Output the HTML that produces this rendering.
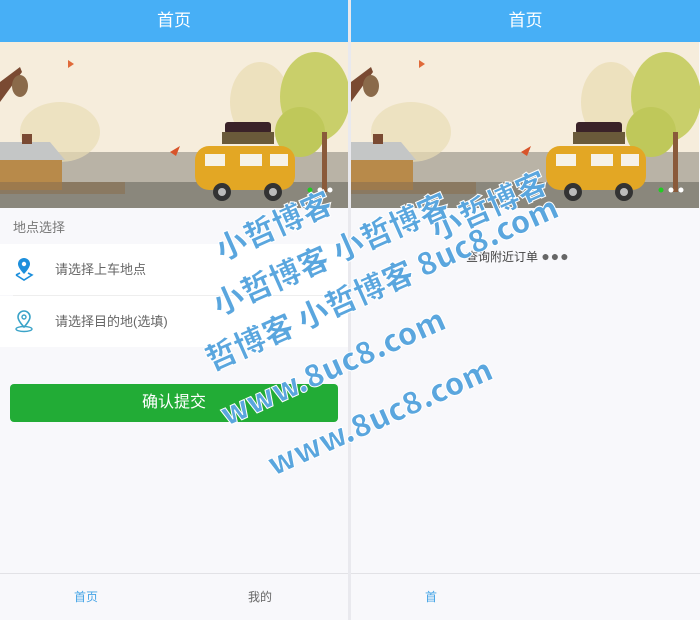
<!DOCTYPE html>
<html><head><meta charset="utf-8"><style>
*{margin:0;padding:0;box-sizing:border-box}
body{width:700px;height:620px;background:#e9e9ee;font-family:"Liberation Sans","Noto Sans CJK SC",sans-serif;position:relative;overflow:hidden}
.p{position:absolute;top:0;height:620px;background:#f8f8fb}
.hd{height:42px;background:#47aff6;color:#fff;font-size:17px;text-align:center;line-height:42px}
.bn{height:166px;position:relative;overflow:hidden}
.lbl{height:36px;line-height:40px;padding-left:13px;font-size:13px;color:#777}
.row{height:51px;background:#fff;position:relative;font-size:13px;color:#666;line-height:51px;padding-left:55px}
.row svg{position:absolute;left:13px;top:13px}
.btn{position:absolute;left:10px;top:384px;width:328px;height:38px;background:#22ac36;border-radius:4px;color:#fff;font-size:16px;text-align:center;line-height:38px}
.tab{position:absolute;left:0;right:0;top:573px;height:47px;border-top:1px solid #e2e2e6;background:#f8f8fb;font-size:12px;line-height:46px}
.wm{position:absolute;font-family:"Noto Sans CJK SC","DejaVu Sans",sans-serif;font-weight:900;font-size:31px;color:#5aa6de;-webkit-text-stroke:1px #fff;transform:rotate(-24deg);transform-origin:0 0;white-space:nowrap;line-height:1}
</style></head><body>
<svg width="0" height="0" style="position:absolute"><defs>
<g id="ban">
<rect width="348" height="166" fill="#f6eddc"/>
<rect y="110" width="348" height="56" fill="#b9b3a6"/>
<rect y="140" width="348" height="26" fill="#8a877c"/>
<ellipse cx="60" cy="90" rx="40" ry="30" fill="#e9ddb5" opacity=".7"/>
<ellipse cx="260" cy="60" rx="30" ry="40" fill="#eadcb0" opacity=".7"/>
<ellipse cx="315" cy="55" rx="35" ry="45" fill="#c9cf6a"/>
<ellipse cx="300" cy="90" rx="25" ry="25" fill="#bfc85a"/>
<rect x="322" y="90" width="5" height="60" fill="#8a5a3a"/>
<path d="M0 40 L20 25 L22 30 L0 60Z" fill="#7a4a32"/>
<ellipse cx="20" cy="44" rx="8" ry="11" fill="#8a6a4a"/>
<path d="M0 100 L50 100 L65 118 L0 118Z" fill="#c4c6c6"/>
<rect x="0" y="118" width="62" height="30" fill="#b88a4a"/>
<rect x="22" y="92" width="10" height="10" fill="#7a4a32"/>
<rect x="0" y="140" width="125" height="12" fill="#8a7050" opacity=".6"/>
<rect x="225" y="80" width="46" height="12" rx="3" fill="#3a2228"/>
<rect x="222" y="90" width="52" height="12" fill="#6a5a3a"/>
<rect x="195" y="104" width="100" height="44" rx="14" fill="#e3a724"/>
<rect x="205" y="112" width="20" height="12" fill="#f6f2e8"/>
<rect x="240" y="112" width="22" height="12" fill="#f6f2e8"/>
<rect x="270" y="112" width="18" height="12" fill="#f6f2e8"/>
<circle cx="222" cy="150" r="9" fill="#333"/><circle cx="222" cy="150" r="4" fill="#bbb"/>
<circle cx="273" cy="150" r="9" fill="#333"/><circle cx="273" cy="150" r="4" fill="#bbb"/>
<path d="M68 18 l6 4 -6 4z" fill="#e06a3a"/><path d="M170 110 l10 -6 -4 10z" fill="#d8542a"/>
<circle cx="310" cy="148" r="2.5" fill="#2c2"/><circle cx="320" cy="148" r="2.5" fill="#fff"/><circle cx="330" cy="148" r="2.5" fill="#fff"/>
</g></defs></svg>

<div class="p" style="left:0;width:348px">
<div class="hd">首页</div>
<div class="bn"><svg width="348" height="166"><use href="#ban"/></svg></div>
<div class="lbl">地点选择</div>
<div class="row"><svg width="22" height="24" viewBox="0 0 22 24"><path d="M11 1a6 6 0 0 1 6 6c0 4-6 10-6 10S5 11 5 7a6 6 0 0 1 6-6z" fill="#1d8fdc"/><circle cx="11" cy="7" r="2.2" fill="#fff"/><path d="M3 18l8 5 8-5-4-2M7 16l-4 2" fill="none" stroke="#1d8fdc" stroke-width="1.6"/></svg>请选择上车地点</div>
<div style="height:1px;background:#eee;margin-left:13px"></div>
<div class="row"><svg width="22" height="24" viewBox="0 0 22 24"><path d="M11 2a6 6 0 0 1 6 6c0 4-6 10-6 10S5 12 5 8a6 6 0 0 1 6-6z" fill="none" stroke="#3aa3c8" stroke-width="1.6"/><circle cx="11" cy="8" r="2" fill="none" stroke="#3aa3c8" stroke-width="1.4"/><ellipse cx="11" cy="20" rx="8" ry="2.5" fill="none" stroke="#3aa3c8" stroke-width="1.4"/></svg>请选择目的地(选填)</div>
<div class="btn">确认提交</div>
<div class="tab"><span style="position:absolute;left:74px;color:#45a4e6">首页</span><span style="position:absolute;left:248px;color:#666">我的</span></div>
</div>

<div class="p" style="left:351px;width:349px">
<div class="hd">首页</div>
<div class="bn"><svg width="349" height="166"><use href="#ban"/></svg></div>
<div style="position:absolute;left:115px;top:248px;font-size:12px;color:#444">查询附近订单 <span style="color:#666;font-size:14px;letter-spacing:1px">●●●</span></div>
<div class="tab"><span style="position:absolute;left:74px;color:#45a4e6">首</span></div>
</div>

<div class="wm" style="left:210px;top:235px">小哲博客</div>
<div class="wm" style="left:425px;top:215px">小哲博客</div>
<div class="wm" style="left:207px;top:290px">小哲博客 小哲博客</div>
<div class="wm" style="left:200px;top:345px">哲博客 小哲博客 8uc8.com</div>
<div class="wm" style="left:215px;top:400px">www.8uc8.com</div>
<div class="wm" style="left:262px;top:450px">www.8uc8.com</div>
</body></html>
